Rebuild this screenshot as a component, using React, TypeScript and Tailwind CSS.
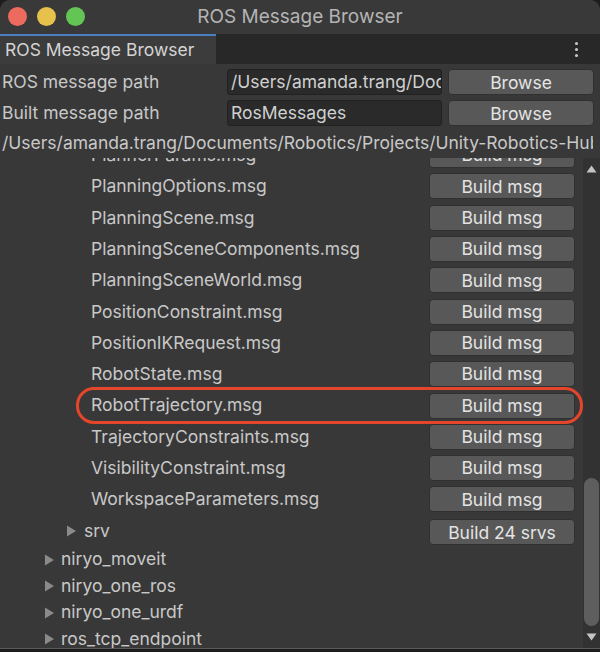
import React from 'react';

const font = { fontFamily: 'Inter, "Noto Sans", sans-serif' };

const msgs = [
    'PlannerParams.msg',
    'PlanningOptions.msg',
    'PlanningScene.msg',
    'PlanningSceneComponents.msg',
    'PlanningSceneWorld.msg',
    'PositionConstraint.msg',
    'PositionIKRequest.msg',
    'RobotState.msg',
    'RobotTrajectory.msg',
    'TrajectoryConstraints.msg',
    'VisibilityConstraint.msg',
    'WorkspaceParameters.msg',
];

const packages = ['niryo_moveit', 'niryo_one_ros', 'niryo_one_urdf', 'ros_tcp_endpoint'];

const Arrow: React.FC = () => (
    <svg width="11" height="12" viewBox="0 0 11 12" className="shrink-0">
        <polygon points="1,0.5 10,6 1,11.5" fill="#8a8a8a" />
    </svg>
);

const BuildButton: React.FC<{ label: string }> = ({ label }) => (
    <button className="w-[146px] h-[26px] rounded-[4px] bg-[#585858] border border-[#303030] text-[17.5px] text-[#e4e4e4] leading-none">
        {label}
    </button>
);

const App: React.FC = () => {
    return (
        <div className="w-[600px] h-[652px] bg-[#1d1d1d] overflow-hidden" style={font}>
            <div className="h-[649px] flex flex-col bg-[#383838] rounded-t-[10px] overflow-hidden border-b border-[#5a5a5a]">
                {/* title bar */}
                <div className="h-[34px] shrink-0 relative flex items-center justify-center bg-[#393939]">
                    <div className="absolute left-[8px] top-[7px] flex gap-[10px]">
                        <span className="w-[19px] h-[19px] rounded-full bg-[#ed6a5e]" />
                        <span className="w-[19px] h-[19px] rounded-full bg-[#e6c14c]" />
                        <span className="w-[19px] h-[19px] rounded-full bg-[#62c554]" />
                    </div>
                    <span className="text-[19px] text-[#b4b4b4]">ROS Message Browser</span>
                </div>

                {/* tab bar */}
                <div className="h-[30px] shrink-0 flex bg-[#282828]">
                    <div className="w-[216px] bg-[#3c3c3c] border-t-2 border-[#4b7fc4] flex items-center pl-[5px] text-[17.5px] text-[#d4d4d4]">
                        ROS Message Browser
                    </div>
                    <div className="flex-1" />
                    <div className="w-[12px] mr-[18px] flex flex-col items-center justify-center gap-[3px]">
                        <span className="w-[3px] h-[3px] rounded-full bg-[#c8c8c8]" />
                        <span className="w-[3px] h-[3px] rounded-full bg-[#c8c8c8]" />
                        <span className="w-[3px] h-[3px] rounded-full bg-[#c8c8c8]" />
                    </div>
                </div>

                {/* settings */}
                <div className="shrink-0 pt-[2px] text-[17.5px] text-[#c8c8c8]">
                    <div className="h-[31.5px] flex items-center pl-[2px] pr-[6px]">
                        <span className="w-[225px] whitespace-nowrap">ROS message path</span>
                        <div className="w-[215px] h-[26px] bg-[#2a2a2a] border border-[#212121] rounded-[3px] flex items-center pl-[3px] overflow-hidden whitespace-nowrap text-[#d0d0d0]">
                            /Users/amanda.trang/Documents/Robotics
                        </div>
                        <button className="ml-[6px] flex-1 h-[26px] rounded-[4px] bg-[#585858] border border-[#303030] text-[#e4e4e4]">Browse</button>
                    </div>
                    <div className="h-[31.5px] flex items-center pl-[2px] pr-[6px]">
                        <span className="w-[225px] whitespace-nowrap">Built message path</span>
                        <div className="w-[215px] h-[26px] bg-[#2a2a2a] border border-[#212121] rounded-[3px] flex items-center pl-[3px] overflow-hidden whitespace-nowrap text-[#d0d0d0]">
                            RosMessages
                        </div>
                        <button className="ml-[6px] flex-1 h-[26px] rounded-[4px] bg-[#585858] border border-[#303030] text-[#e4e4e4]">Browse</button>
                    </div>
                    <div className="h-[29px] flex items-center pl-[2px] mr-[7px] whitespace-nowrap overflow-hidden">
                        /Users/amanda.trang/Documents/Robotics/Projects/Unity-Robotics-Hub/tutorials
                    </div>
                </div>

                {/* tree view */}
                <div className="flex-1 min-h-0 flex">
                    <div className="flex-1 overflow-hidden text-[17.5px] text-[#c8c8c8]">
                        <div className="mt-[-18.5px]">
                            {msgs.map((m) => (
                                <div key={m} className="relative h-[31.3px] flex items-center pl-[91px] pr-[8px]">
                                    <span className="flex-1 whitespace-nowrap">{m}</span>
                                    <BuildButton label="Build msg" />
                                    {m === 'RobotTrajectory.msg' && (
                                        <div className="absolute left-[76px] right-0 top-[-3px] bottom-[-3px] border-[3px] border-[#e4462b] rounded-[18px]" />
                                    )}
                                </div>
                            ))}
                            <div className="h-[31.3px] flex items-center pl-[66px] pr-[8px]">
                                <Arrow />
                                <span className="flex-1 ml-[7px]">srv</span>
                                <div className="pt-[4px]">
                                    <BuildButton label="Build 24 srvs" />
                                </div>
                            </div>
                            {packages.map((p) => (
                                <div key={p} className="h-[26.5px] flex items-center pl-[44px]">
                                    <Arrow />
                                    <span className="ml-[6px]">{p}</span>
                                </div>
                            ))}
                        </div>
                    </div>

                    {/* scrollbar */}
                    <div className="w-[17px] shrink-0 flex flex-col items-center bg-[#323232]">
                        <div className="h-[22px] flex items-center justify-center">
                            <svg width="11" height="8" viewBox="0 0 11 8">
                                <polygon points="5.5,0.5 10.5,7.5 0.5,7.5" fill="#c4c4c4" />
                            </svg>
                        </div>
                        <div className="flex-1 w-full flex flex-col justify-end px-[1px]">
                            <div className="h-[148px] rounded-full bg-[#5e5e5e]" />
                        </div>
                        <div className="h-[22px] flex items-center justify-center">
                            <svg width="11" height="8" viewBox="0 0 11 8">
                                <polygon points="0.5,0.5 10.5,0.5 5.5,7.5" fill="#c4c4c4" />
                            </svg>
                        </div>
                    </div>
                </div>
            </div>
        </div>
    );
};

export default App;
